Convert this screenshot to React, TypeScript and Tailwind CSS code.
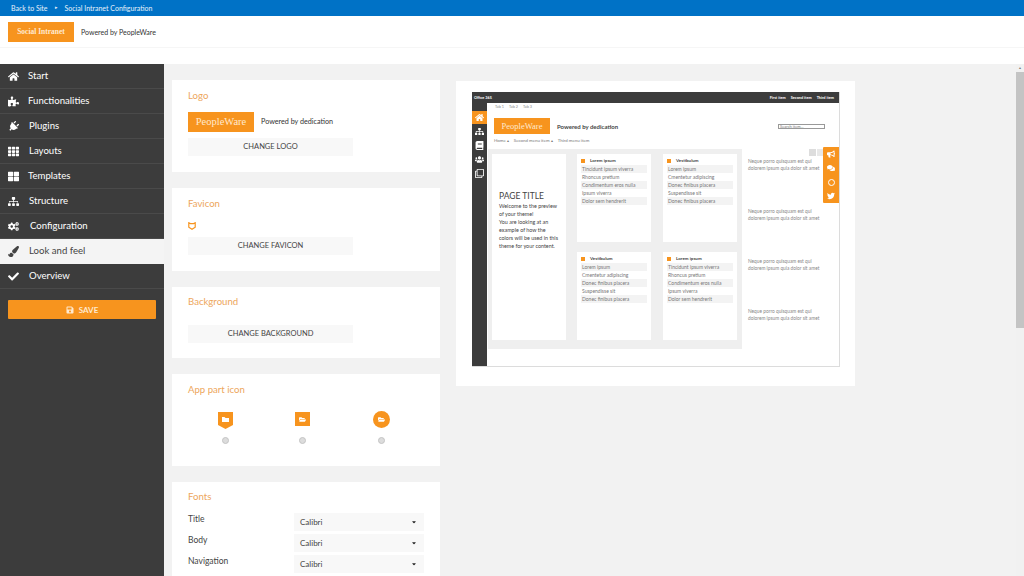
import React from "react";
import {
  FaHome, FaPuzzlePiece, FaPlug, FaTh, FaThLarge, FaSitemap, FaCogs, FaPaintBrush, FaCheck, FaSave,
  FaBullhorn, FaComments, FaTwitter, FaFolderOpen, FaUsers, FaBook, FaRegClone, FaCaretDown,
} from "react-icons/fa";

const nav = [
  { label: "Start", icon: FaHome, tx: "w-[20px]" },
  { label: "Functionalities", icon: FaPuzzlePiece, tx: "w-[20px]" },
  { label: "Plugins", icon: FaPlug, tx: "w-[21px]", rot: "block w-fit rotate-45" },
  { label: "Layouts", icon: FaTh, tx: "w-[21px]" },
  { label: "Templates", icon: FaThLarge, tx: "w-[20px]" },
  { label: "Structure", icon: FaSitemap, tx: "w-[21px]" },
  { label: "Configuration", icon: FaCogs, tx: "w-[22px]" },
  { label: "Look and feel", icon: FaPaintBrush, tx: "w-[21px]", active: true },
  { label: "Overview", icon: FaCheck, tx: "w-[21px]" },
];

function Card({ title, className, children }: { title: string; className: string; children?: React.ReactNode }) {
  return (
    <section className={`bg-white px-[16px] shrink-0 ${className}`}>
      <h2 className="text-[9.6px] leading-[14px] font-normal text-[#eda65c]">{title}</h2>
      {children}
    </section>
  );
}

function Wide({ label, className }: { label: string; className?: string }) {
  return (
    <div className={`w-[165px] h-[18px] bg-[#f8f8f8] flex items-center justify-center text-[7.5px] text-[#444] ${className ?? ""}`}>
      {label}
    </div>
  );
}

function Radio() {
  return <span className="block w-[7px] h-[7px] rounded-full bg-[#dcdcdc] border border-[#c4c4c4]" />;
}

function FontRow({ label }: { label: string }) {
  return (
    <div className="flex justify-between items-start h-[21px]">
      <span className="text-[8.5px] leading-[12px] text-[#444]">{label}</span>
      <div className="w-[130px] h-[18px] bg-[#f8f8f8] flex items-center justify-between pl-[6px] pr-[7px] text-[8px] text-[#444]">
        Calibri
        <FaCaretDown className="text-[6px] text-[#222]" />
      </div>
    </div>
  );
}

const listA = ["Tincidunt ipsum viverra", "Rhoncus pretium", "Condimentum eros nulla", "Ipsum viverra", "Dolor sem hendrerit"];
const listB = ["Lorem ipsum", "Cmentetur adipiscing", "Donec finibus placera", "Suspendisse sit", "Donec finibus placera"];

function MiniCard({ title, items }: { title: string; items: string[] }) {
  return (
    <div className="w-[74px] h-[88px] bg-white px-[4px] pt-[4px]">
      <div className="flex items-center gap-[5px] h-[5px] mb-[2px]">
        <span className="w-[4px] h-[4px] bg-[#f7941e]" />
        <span className="text-[4.5px] leading-[5px] font-bold text-[#444]">{title}</span>
      </div>
      {items.map((t, i) => (
        <div key={i} className={`h-[8px] text-[5px] leading-[8px] pl-[1px] text-[#777] whitespace-nowrap overflow-hidden ${i % 2 === 0 ? "bg-[#f3f3f3]" : ""}`}>
          {t}
        </div>
      ))}
    </div>
  );
}

function Quote({ className }: { className: string }) {
  return (
    <p className={`text-[4.8px] leading-[7px] text-[#888] whitespace-nowrap ${className}`}>
      Neque porro quisquam est qui
      <br />
      dolorem ipsum quia dolor sit amet
    </p>
  );
}

function Preview() {
  return (
    <div className="w-[368px] h-[275px] border-r border-b border-[#dcdcdc] flex flex-col relative">
      <div className="h-[11px] bg-[#3c3c3c] flex items-center justify-between px-[2px] pr-[5px] text-[3.8px] font-bold text-white">
        <span>Office 365</span>
        <span className="flex gap-[5px]">
          <span>First item</span><span>Second item</span><span>Third item</span>
        </span>
      </div>
      <div className="flex flex-1 min-h-0">
        <div className="w-[15px] bg-[#3c3c3c] flex flex-col items-center pt-[8px]">
          <div className="w-[15px] h-[13px] bg-[#f7941e] flex items-center justify-center text-white text-[9px]"><FaHome /></div>
          <div className="flex flex-col items-center text-white text-[9px] gap-[5px] mt-[3px]">
            <FaSitemap /><FaBook /><FaUsers /><FaRegClone />
          </div>
        </div>
        <div className="flex-1 flex flex-col min-w-0">
          <div className="h-[15px] flex gap-[5px] pl-[8px] pt-[1px] text-[3.8px] leading-[6px] text-[#888]">
            <span>Tab 1</span><span>Tab 2</span><span>Tab 3</span>
          </div>
          <div className="flex items-center h-[16px] pl-[7px] pr-[14px]">
            <div className="w-[56px] h-[16px] bg-[#f7941e] flex items-center justify-center text-[8.5px] text-[#ffe9cf] font-['Liberation_Serif',serif]">PeopleWare</div>
            <span className="ml-[7px] text-[6px] text-[#444] font-bold">Powered by dedication</span>
            <div className="ml-auto w-[47px] h-[5px] border border-[#999] text-[4px] leading-[3px] pl-[1px] text-[#777]">Search item...</div>
          </div>
          <div className="h-[15px] flex gap-[5px] pl-[7px] pt-[4px] text-[4.4px] leading-[6px] text-[#777]">
            <span>Home ▴</span><span>Second menu item ▴</span><span>Third menu item</span>
          </div>
          <div className="flex items-start">
            <div className="w-[254px] h-[200px] ml-[1px] bg-[#efefef] flex gap-[11px] p-[4px] pt-[5px]">
              <div className="w-[74px] h-[186px] bg-white px-[7px] pt-[37px]">
                <div className="text-[8.5px] leading-[10px] text-[#444]">PAGE TITLE</div>
                <p className="text-[5.4px] leading-[8px] text-[#444] mt-[1px]">
                  Welcome to the preview of your theme!<br />You are looking at an example of how the colors will be used in this theme for your content.
                </p>
              </div>
              <div className="flex flex-col gap-[10px]">
                <MiniCard title="Lorem ipsum" items={listA} />
                <MiniCard title="Vestibulum" items={listB} />
              </div>
              <div className="flex flex-col gap-[10px] ml-[1px]">
                <MiniCard title="Vestibulum" items={listB} />
                <MiniCard title="Lorem ipsum" items={listA} />
              </div>
            </div>
            <div className="pl-[6px] pt-[9px]">
              <Quote className="" />
              <Quote className="mt-[36px]" />
              <Quote className="mt-[36px]" />
              <Quote className="mt-[36px]" />
            </div>
          </div>
        </div>
      </div>
      <div className="absolute left-[351px] top-[55px] w-[16px] bg-[#f7941e] rounded-l-[1px] flex flex-col items-center text-white text-[8px]">
        <span className="h-[14px] flex items-center"><FaBullhorn /></span>
        <span className="h-[14px] flex items-center"><FaComments /></span>
        <span className="h-[14px] flex items-center"><span className="block w-[7px] h-[7px] rounded-full border border-white" /></span>
        <span className="h-[14px] flex items-center"><FaTwitter /></span>
      </div>
      <div className="absolute left-[337px] top-[57px] flex gap-[1px]">
        <span className="w-[7px] h-[7px] bg-[#dddddd]" />
        <span className="w-[6px] h-[7px] bg-[#e8e8e8]" />
      </div>
    </div>
  );
}

export default function App() {
  return (
    <div className="w-[1024px] h-[576px] overflow-hidden flex flex-col bg-white font-['Lato',sans-serif]">
      <header className="h-[16px] shrink-0 bg-[#0072c6] flex items-center pl-[11px] text-[7px] text-[#e6f1fa]">
        <span>Back to Site</span>
        <span className="mx-[7px] text-[5px]">▸</span>
        <span>Social Intranet Configuration</span>
      </header>
      <div className="h-[32px] shrink-0 flex items-center pl-[8px] pt-[1px] border-b border-[#f6f6f6]">
        <div className="w-[66px] h-[20px] bg-[#f7941e] flex items-center justify-center text-[7.5px] font-semibold text-[#ffe9cf] font-['Liberation_Serif',serif]">Social Intranet</div>
        <span className="ml-[7px] text-[7px] text-[#333]">Powered by PeopleWare</span>
      </div>
      <div className="h-[16px] shrink-0" />
      <div className="flex flex-1 min-h-0">
        <aside className="w-[164px] shrink-0 bg-[#3c3c3c]">
          {nav.map(({ label, icon: Icon, tx, active, rot }) => (
            <div key={label} className={`h-[25px] flex items-center pl-[8px] pt-[1px] text-[9.6px] border-b ${active ? "bg-[#f4f4f4] text-[#444] border-[#f4f4f4]" : "text-white border-[#4a4a4a]"}`}>
              <span className={`${tx} text-[11px] shrink-0`}><Icon className={rot} /></span>
              {label}
            </div>
          ))}
          <button className="ml-[8px] mt-[11px] w-[148px] h-[19px] rounded-[1px] bg-[#f7941e] flex items-center justify-center gap-[5px] text-[8px] font-bold text-[#ffe9cf]">
            <FaSave className="text-[8px]" /> SAVE
          </button>
        </aside>
        <main className="flex-1 min-w-0 bg-[#f2f2f2] flex relative">
          <div className="w-[268px] ml-[8px] pt-[16px] flex flex-col gap-[16px] shrink-0">
            <Card title="Logo" className="h-[92px] pt-[9px]">
              <div className="flex items-center mt-[9px]">
                <div className="w-[66px] h-[20px] bg-[#f7941e] flex items-center justify-center text-[10.5px] text-[#ffe9cf] font-['Liberation_Serif',serif]">PeopleWare</div>
                <span className="ml-[7px] text-[7.2px] text-[#333]">Powered by dedication</span>
              </div>
              <Wide label="CHANGE LOGO" className="mt-[6px]" />
            </Card>
            <Card title="Favicon" className="h-[83px] pt-[9px]">
              <svg viewBox="0 0 10 10" className="w-[8px] h-[8px] mt-[11px]">
                <path d="M1 1l2 1h4l2-1v5.5L5 9 1 6.500z" fill="none" stroke="#f7941e" strokeWidth="1.500" />
              </svg>
              <Wide label="CHANGE FAVICON" className="mt-[7px]" />
            </Card>
            <Card title="Background" className="h-[71px] pt-[8px]">
              <Wide label="CHANGE BACKGROUND" className="mt-[16px]" />
            </Card>
            <Card title="App part icon" className="h-[92px] pt-[9px]">
              <div className="flex mt-[15px]">
                <div className="w-[74px] flex flex-col items-center gap-[7px]">
                  <svg viewBox="0 0 15 18" className="w-[15px] h-[18px]">
                    <path d="M0 0h15v13l-7.500 4L0 13z" fill="#f7941e" />
                    <path d="M4 5h2.500l1 1H11v4H4z" fill="#fff" />
                  </svg>
                  <Radio />
                </div>
                <div className="w-[80px] flex flex-col items-center gap-[7px]">
                  <div className="h-[18px] flex items-start">
                    <div className="w-[15px] h-[14px] bg-[#f7941e] flex items-center justify-center text-white text-[7px]"><FaFolderOpen /></div>
                  </div>
                  <Radio />
                </div>
                <div className="w-[78px] flex flex-col items-center gap-[7px]">
                  <div className="h-[18px] flex items-start">
                    <div className="w-[17px] h-[17px] -mt-[1px] rounded-full bg-[#f7941e] flex items-center justify-center text-white text-[7px]"><FaFolderOpen /></div>
                  </div>
                  <Radio />
                </div>
              </div>
            </Card>
            <Card title="Fonts" className="h-[120px] pt-[8px] pr-[16px]">
              <div className="mt-[9px]">
                <FontRow label="Title" />
                <FontRow label="Body" />
                <FontRow label="Navigation" />
              </div>
            </Card>
          </div>
          <div className="ml-[16px] mt-[17px] w-[399px] h-[305px] bg-white pl-[16px] pt-[11px] shrink-0">
            <Preview />
          </div>
          <div className="absolute right-0 top-0 bottom-0 w-[8px] bg-[#f1f1f1] flex flex-col">
            <div className="h-[8px] flex items-center justify-center text-[4px] text-[#777]">▴</div>
            <div className="h-[256px] bg-[#c4c4c4]" />
          </div>
        </main>
      </div>
    </div>
  );
}
